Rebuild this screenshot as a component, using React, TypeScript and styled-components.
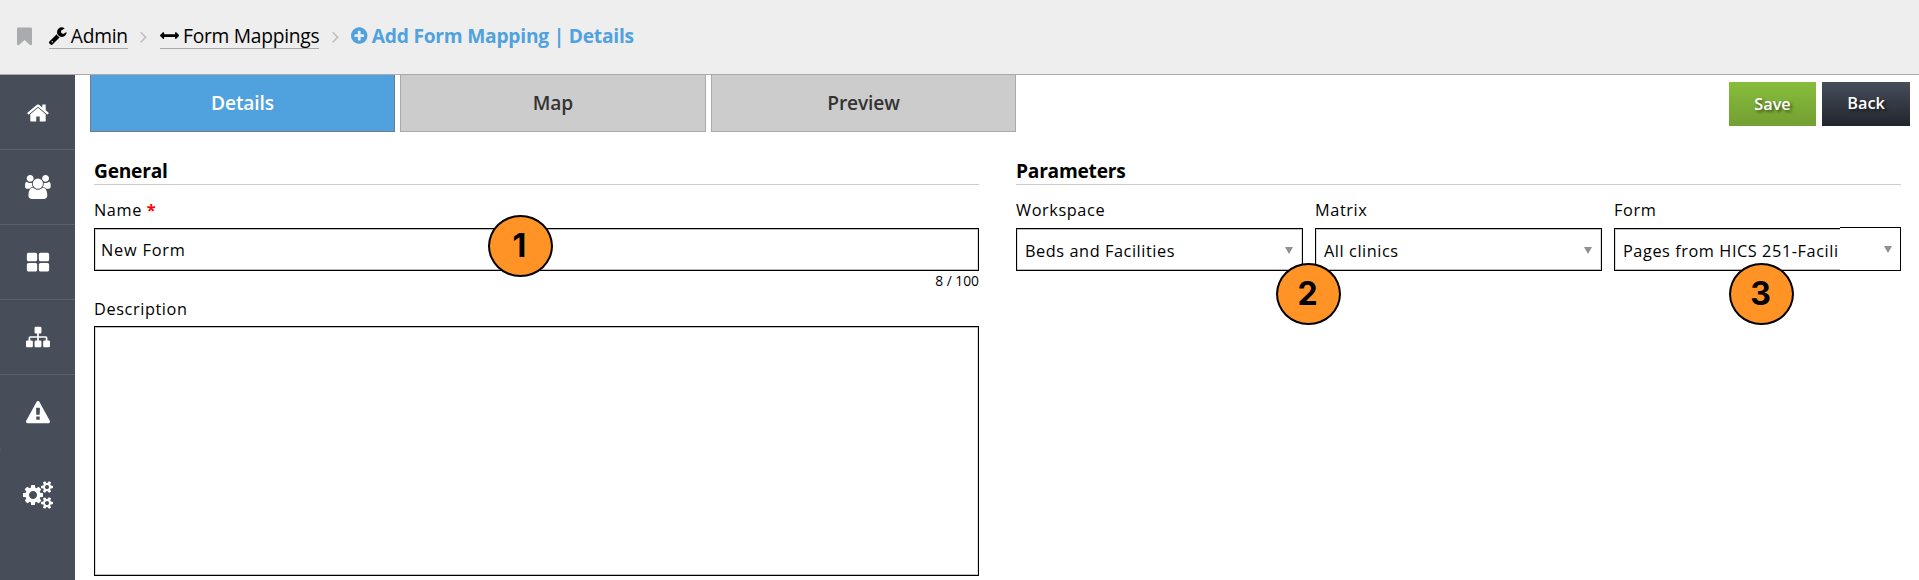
import React from 'react';
import styled, { createGlobalStyle, css } from 'styled-components';

const GlobalStyle = createGlobalStyle`
  *, *::before, *::after { box-sizing: border-box; }
  body {
    margin: 0;
    background: #fff;
    color: #000;
    font-family: 'Open Sans', 'Liberation Sans', sans-serif;
    overflow: hidden;
  }
`;

const icons = {
  bookmark:
    'M1420 128q23 0 44 9 33 13 52.5 41t19.5 62v1289q0 34-19.5 62t-52.5 41q-19 8-44 8-48 0-83-32l-441-424-441 424q-36 33-83 33-23 0-44-9-33-13-52.5-41t-19.5-62v-1289q0-34 19.5-62t52.5-41q21-9 44-9h1048z',
  wrench:
    'M448 1472q0-26-19-45t-45-19-45 19-19 45 19 45 45 19 45-19 19-45zm644-420l-682 682q-37 37-90 37-52 0-91-37l-106-108q-38-36-38-90 0-53 38-91l681-681q39 98 114.5 173.5t173.5 114.5zm634-435q0 39-23 106-47 134-164.5 217.5t-258.5 83.5q-185 0-316.5-131.5t-131.5-316.5 131.5-316.5 316.5-131.5q58 0 121.5 16.5t107.5 46.5q16 11 16 28t-16 28l-293 169v224l193 107q5-3 79-48.5t135.5-81 70.5-35.5q15 0 23.5 10t8.5 25z',
  arrows:
    'M1792 896q0 26-19 45l-256 256q-19 19-45 19t-45-19-19-45v-128h-1024v128q0 26-19 45t-45 19-45-19l-256-256q-19-19-19-45t19-45l256-256q19-19 45-19t45 19 19 45v128h1024v-128q0-26 19-45t45-19 45 19l256 256q19 19 19 45z',
  plus:
    'M1344 960v-128q0-26-19-45t-45-19h-256v-256q0-26-19-45t-45-19h-128q-26 0-45 19t-19 45v256h-256q-26 0-45 19t-19 45v128q0 26 19 45t45 19h256v256q0 26 19 45t45 19h128q26 0 45-19t19-45v-256h256q26 0 45-19t19-45zm320-64q0 209-103 385.5t-279.5 279.5-385.5 103-385.5-103-279.5-279.5-103-385.5 103-385.5 279.5-279.5 385.5-103 385.5 103 279.5 279.5 103 385.5z',
  angle:
    'M1171 960q0 13-10 23l-466 466q-10 10-23 10t-23-10l-50-50q-10-10-10-23t10-23l393-393-393-393q-10-10-10-23t10-23l50-50q10-10 23-10t23 10l466 466q10 10 10 23z',
  home:
    'M1472 992v480q0 26-19 45t-45 19h-384v-384h-256v384h-384q-26 0-45-19t-19-45v-480q0-1 .5-3t.5-3l575-474 575 474q1 2 1 6zm223-69l-62 74q-8 9-21 11h-3q-13 0-21-7l-692-577-692 577q-12 8-24 7-13-2-21-11l-62-74q-8-10-7-23.5t11-21.5l719-599q32-26 76-26t76 26l244 204v-195q0-14 9-23t23-9h192q14 0 23 9t9 23v408l219 182q10 8 11 21.5t-7 23.5z',
  users:
    'M593 896q-162 5-265 128h-134q-82 0-138-40.5t-56-118.5q0-353 124-353 6 0 43.5 21t97.5 42.5 119 21.5q67 0 133-23-5 37-5 66 0 139 81 256zm1071 637q0 120-73 189.5t-194 69.5h-874q-121 0-194-69.5t-73-189.5q0-53 3.5-103.5t14-109 26.5-108.5 43-97.5 62-81 85.5-53.5 111.5-20q10 0 43 21.5t73 48 107 48 135 21.5 135-21.5 107-48 73-48 43-21.5q61 0 111.5 20t85.5 53.5 62 81 43 97.5 26.5 108.5 14 109 3.5 103.5zm-1024-1277q0 106-75 181t-181 75-181-75-75-181 75-181 181-75 181 75 75 181zm704 384q0 159-112.5 271.5t-271.5 112.5-271.5-112.5-112.5-271.5 112.5-271.5 271.5-112.5 271.5 112.5 112.5 271.5zm576 225q0 78-56 118.5t-138 40.5h-134q-103-123-265-128 81-117 81-256 0-29-5-66 66 23 133 23 59 0 119-21.5t97.5-42.5 43.5-21q124 0 124 353zm-128-609q0 106-75 181t-181 75-181-75-75-181 75-181 181-75 181 75 75 181z',
  grid:
    'M832 1024v384q0 52-38 90t-90 38h-512q-52 0-90-38t-38-90v-384q0-52 38-90t90-38h512q52 0 90 38t38 90zm0-768v384q0 52-38 90t-90 38h-512q-52 0-90-38t-38-90v-384q0-52 38-90t90-38h512q52 0 90 38t38 90zm896 768v384q0 52-38 90t-90 38h-512q-52 0-90-38t-38-90v-384q0-52 38-90t90-38h512q52 0 90 38t38 90zm0-768v384q0 52-38 90t-90 38h-512q-52 0-90-38t-38-90v-384q0-52 38-90t90-38h512q52 0 90 38t38 90z',
  sitemap:
    'M1792 1248v320q0 40-28 68t-68 28h-320q-40 0-68-28t-28-68v-320q0-40 28-68t68-28h96v-192h-512v192h96q40 0 68 28t28 68v320q0 40-28 68t-68 28h-320q-40 0-68-28t-28-68v-320q0-40 28-68t68-28h96v-192h-512v192h96q40 0 68 28t28 68v320q0 40-28 68t-68 28h-320q-40 0-68-28t-28-68v-320q0-40 28-68t68-28h96v-192q0-52 38-90t90-38h512v-192h-96q-40 0-68-28t-28-68v-320q0-40 28-68t68-28h320q40 0 68 28t28 68v320q0 40-28 68t-68 28h-96v192h512q52 0 90 38t38 90v192h96q40 0 68 28t28 68z',
  warning:
    'M1024 1375v-190q0-14-9.5-23.5t-22.5-9.5h-192q-13 0-22.5 9.5t-9.5 23.5v190q0 14 9.5 23.5t22.5 9.5h192q13 0 22.5-9.5t9.5-23.5zm-2-374l18-459q0-12-10-19-13-11-24-11h-220q-11 0-24 11-10 7-10 21l17 457q0 10 10 16.5t24 6.5h185q14 0 23.5-6.5t10.5-16.5zm-14-934l768 1408q35 63-2 126-17 29-46.5 46t-63.5 17h-1536q-34 0-63.5-17t-46.5-46q-37-63-2-126l768-1408q17-31 47-49t65-18 65 18 47 49z',
  cogs:
    'M896 896q0-106-75-181t-181-75-181 75-75 181 75 181 181 75 181-75 75-181zm768 512q0-52-38-90t-90-38-90 38-38 90q0 53 37.5 90.5t90.5 37.5 90.5-37.5 37.5-90.5zm0-1024q0-52-38-90t-90-38-90 38-38 90q0 53 37.5 90.5t90.5 37.5 90.5-37.5 37.5-90.5zm-384 421v185q0 10-7 19.5t-16 10.5l-155 24q-11 35-32 76 34 48 90 115 7 11 7 20 0 12-7 19-23 30-82.5 89.5t-78.5 59.5q-11 0-21-7l-115-90q-37 19-77 31-11 108-23 155-7 24-30 24h-186q-11 0-20-7.5t-10-17.5l-23-153q-34-10-75-31l-118 89q-7 7-20 7-11 0-21-8-144-133-144-160 0-9 7-19 10-14 41-53t47-61q-23-44-35-82l-152-24q-10-1-17-9.5t-7-19.5v-185q0-10 7-19.5t16-10.5l155-24q11-35 32-76-34-48-90-115-7-11-7-20 0-12 7-20 22-30 82-89t79-59q11 0 21 7l115 90q34-18 77-32 11-108 23-154 7-24 30-24h186q11 0 20 7.5t10 17.5l23 153q34 10 75 31l118-89q8-7 20-7 11 0 21 8 144 133 144 160 0 8-7 19-12 16-42 54t-45 60q23 48 34 82l152 23q10 2 17 10.5t7 19.5zm640 533v140q0 16-149 31-12 27-30 52 51 113 51 138 0 4-4 7-122 71-124 71-8 0-46-47t-52-68q-20 2-30 2t-30-2q-14 21-52 68t-46 47q-2 0-124-71-4-3-4-7 0-25 51-138-18-25-30-52-149-15-149-31v-140q0-16 149-31 13-29 30-52-51-113-51-138 0-4 4-7 4-2 35-20t59-34 30-16q8 0 46 46.5t52 67.5q20-2 30-2t30 2q51-71 92-112l6-2q4 0 124 70 4 3 4 7 0 25-51 138 17 23 30 52 149 15 149 31zm0-1024v140q0 16-149 31-12 27-30 52 51 113 51 138 0 4-4 7-122 71-124 71-8 0-46-47t-52-68q-20 2-30 2t-30-2q-14 21-52 68t-46 47q-2 0-124-71-4-3-4-7 0-25 51-138-18-25-30-52-149-15-149-31v-140q0-16 149-31 13-29 30-52-51-113-51-138 0-4 4-7 4-2 35-20t59-34 30-16q8 0 46 46.5t52 67.5q20-2 30-2t30 2q51-71 92-112l6-2q4 0 124 70 4 3 4 7 0 25-51 138 17 23 30 52 149 15 149 31z',
};

type IconName = keyof typeof icons;

const Svg = styled.svg`
  display: block;
  flex: none;
  fill: currentColor;
`;

/* x and w crop the 1792-unit em box to the glyph's own advance width. */
function Icon({ name, size, x = 0, w = 1792 }: { name: IconName; size: number; x?: number; w?: number }) {
  return (
    <Svg width={(size * w) / 1792} height={size} viewBox={`${x} 0 ${w} 1792`} aria-hidden="true">
      <path d={icons[name]} />
    </Svg>
  );
}

const Page = styled.div`
  display: flex;
  flex-direction: column;
  width: 1919px;
  height: 580px;
  overflow: hidden;
`;

const Header = styled.header`
  display: flex;
  align-items: flex-start;
  height: 75px;
  padding: 24px 0 0 17px;
  background: #eee;
  border-bottom: 1px solid #aaa;
  font-size: 19.2px;
  line-height: 24px;
  letter-spacing: -0.25px;
`;

const Bookmark = styled.span`
  width: 32px;
  padding-top: 2px;
  color: #a9abae;
`;

const Crumb = styled.a`
  display: flex;
  align-items: center;
  gap: 4px;
  height: 25px;
  border-bottom: 1px solid #aaa;
  color: #000;
  white-space: nowrap;
`;

const Separator = styled.span`
  display: flex;
  justify-content: center;
  width: 32px;
  padding-top: 3px;
  color: #bbb;
`;

const Current = styled.strong`
  display: flex;
  align-items: center;
  gap: 4px;
  height: 24px;
  color: #4fa2de;
  font-weight: 700;
  letter-spacing: -0.23px;
  white-space: nowrap;
`;

const Body = styled.div`
  display: flex;
  height: 505px;
`;

const Sidebar = styled.nav`
  width: 75px;
  background: #474e5a;
`;

const NavItem = styled.a<{ $last?: boolean; $low?: boolean }>`
  display: flex;
  align-items: center;
  justify-content: center;
  height: ${p => (p.$last ? 89 : 75)}px;
  padding: ${p => (p.$low ? 2 : 0)}px 0 0 1px;
  color: #fff;
  border-bottom: ${p => (p.$last ? 'none' : '1px solid #5b616c')};
  &:nth-child(5) {
    border-image: linear-gradient(90deg, #5b616c 2px, transparent 2px) 1;
  }
`;

const Main = styled.main`
  flex: 1;
  display: flex;
  flex-direction: column;
`;

const TopRow = styled.div`
  display: flex;
  justify-content: space-between;
  height: 57px;
  padding: 0 9px 0 15px;
`;

const Tabs = styled.div`
  display: grid;
  grid-template-columns: 305px 306px 305px;
  gap: 5px;
`;

const Tab = styled.button<{ $active?: boolean }>`
  height: 57px;
  padding: 0 0 1px;
  border: 1px solid ${p => (p.$active ? '#747b84' : '#aaa')};
  border-top: 0;
  background: ${p => (p.$active ? '#4fa2de' : '#ccc')};
  color: ${p => (p.$active ? '#fff' : '#333')};
  font: 600 19.2px 'Open Sans', sans-serif;
  letter-spacing: -0.15px;
`;

const Actions = styled.div`
  display: flex;
  gap: 6px;
  padding-top: 7px;
`;

const Button = styled.button<{ $primary?: boolean }>`
  width: ${p => (p.$primary ? 87 : 88)}px;
  height: 44px;
  padding: ${p => (p.$primary ? '0' : '0 0 2px')};
  border: 0;
  background: ${p =>
    p.$primary ? 'linear-gradient(#87bd3b, #739f33)' : 'linear-gradient(#474e5a, #21252d)'};
  color: #fff;
  font: 600 16.3px 'Open Sans', sans-serif;
  text-shadow: 2px 2px 3px rgba(0, 0, 0, 0.5);
`;

const Columns = styled.div`
  display: grid;
  grid-template-columns: 885px 885px;
  column-gap: 37px;
  padding: 24px 0 0 19px;
`;

const Section = styled.section`
  display: flex;
  flex-direction: column;
  min-width: 0;
`;

const SectionTitle = styled.h2`
  height: 29px;
  margin: 0 0 12px;
  border-bottom: 1px solid #ccc;
  font-size: 19.2px;
  font-weight: 700;
  line-height: 30px;
  letter-spacing: -0.25px;
`;

const Label = styled.label`
  display: block;
  height: 31px;
  font-size: 16.3px;
  line-height: 26px;
  letter-spacing: 0.6px;
  white-space: nowrap;
`;

const Required = styled.span`
  color: #f00;
  font-weight: 700;
`;

const box = css`
  border: 1px solid #000;
  background: #fff;
  box-shadow: inset 0 1px #bbb, inset 0 -1px #bbb, inset 1px 0 #ddd, inset -1px 0 #ddd;
`;

const TextBox = styled.div`
  ${box}
  height: 43px;
  padding-left: 6px;
  font-size: 16.3px;
  line-height: 43px;
  letter-spacing: 0.8px;
`;

const Counter = styled.div`
  height: 25px;
  font-size: 13.8px;
  line-height: 19px;
  text-align: right;
`;

const TextArea = styled.div`
  ${box}
  height: 250px;
  margin-top: -1px;
`;

const FieldRow = styled.div`
  display: grid;
  grid-template-columns: repeat(3, 287px);
  column-gap: 12px;
`;

const SelectBox = styled.div`
  ${box}
  display: flex;
  height: 43px;
  padding-left: 8px;
`;

const SelectValue = styled.span`
  flex: 1;
  min-width: 0;
  font-size: 16.3px;
  line-height: 44px;
  letter-spacing: 0.57px;
  white-space: nowrap;
`;

const SelectArrow = styled.span<{ $raised?: boolean }>`
  width: 25px;
  padding-top: 18px;
  color: #909090;
  svg { margin-left: 8px; }
  ${p =>
    p.$raised &&
    css`
      width: 61px;
      height: 43px;
      margin: -2px -1px 0 0;
      border: solid #000;
      border-width: 1px 1px 0 0;
      background: #fff;
      svg { margin-left: 44px; }
    `}
`;

const Marker = styled.span<{ $x: number; $y: number }>`
  position: absolute;
  left: ${p => p.$x}px;
  top: ${p => p.$y}px;
  display: flex;
  align-items: center;
  justify-content: center;
  width: 65px;
  height: 62px;
  padding: 0 2px 1px 0;
  border: 2px solid #000;
  border-radius: 50%;
  background: #ff9326;
  font: 700 32px Inter, 'Liberation Sans', sans-serif;
`;

function Select({ label, value, raised }: { label: string; value: string; raised?: boolean }) {
  return (
    <div>
      <Label>{label}</Label>
      <SelectBox>
        <SelectValue>{value}</SelectValue>
        <SelectArrow $raised={raised}>
          <Svg width="8" height="7" viewBox="0 0 8 7">
            <path d="M0 0h8L4 7z" />
          </Svg>
        </SelectArrow>
      </SelectBox>
    </div>
  );
}

export default function App() {
  return (
    <Page>
      <GlobalStyle />
      <Header>
        <Bookmark>
          <Icon name="bookmark" size={21} x={256} w={1280} />
        </Bookmark>
        <Crumb>
          <Icon name="wrench" size={19.2} x={85} w={1664} />
          Admin
        </Crumb>
        <Separator>
          <Icon name="angle" size={19.2} x={555} w={640} />
        </Separator>
        <Crumb>
          <Icon name="arrows" size={19.2} />
          Form Mappings
        </Crumb>
        <Separator>
          <Icon name="angle" size={19.2} x={555} w={640} />
        </Separator>
        <Current>
          <Icon name="plus" size={19.2} x={128} w={1536} />
          Add Form Mapping | Details
        </Current>
      </Header>
      <Body>
        <Sidebar>
          <NavItem $low><Icon name="home" size={24} /></NavItem>
          <NavItem><Icon name="users" size={24} w={1920} /></NavItem>
          <NavItem $low><Icon name="grid" size={24} /></NavItem>
          <NavItem><Icon name="sitemap" size={24} /></NavItem>
          <NavItem $low><Icon name="warning" size={24} /></NavItem>
          <NavItem $last><Icon name="cogs" size={28} w={1920} /></NavItem>
        </Sidebar>
        <Main>
          <TopRow>
            <Tabs>
              <Tab $active>Details</Tab>
              <Tab>Map</Tab>
              <Tab>Preview</Tab>
            </Tabs>
            <Actions>
              <Button $primary>Save</Button>
              <Button>Back</Button>
            </Actions>
          </TopRow>
          <Columns>
            <Section>
              <SectionTitle>General</SectionTitle>
              <Label>Name <Required>*</Required></Label>
              <TextBox>New Form</TextBox>
              <Counter>8 / 100</Counter>
              <Label>Description</Label>
              <TextArea />
            </Section>
            <Section>
              <SectionTitle>Parameters</SectionTitle>
              <FieldRow>
                <Select label="Workspace" value="Beds and Facilities" />
                <Select label="Matrix" value="All clinics" />
                <Select label="Form" value="Pages from HICS 251-Facili" raised />
              </FieldRow>
            </Section>
          </Columns>
        </Main>
      </Body>
      <Marker $x={488} $y={215}>1</Marker>
      <Marker $x={1276} $y={263}>2</Marker>
      <Marker $x={1729} $y={263}>3</Marker>
    </Page>
  );
}
